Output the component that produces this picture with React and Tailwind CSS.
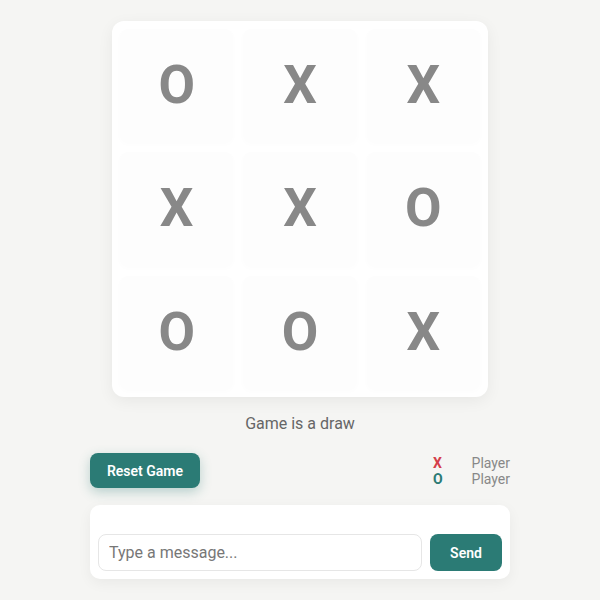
import React, { useState } from 'react';

const board = ['O', 'X', 'X', 'X', 'X', 'O', 'O', 'O', 'X'];

const App = () => {
  const [message, setMessage] = useState('');

  return (
    <div className="min-h-[600px] bg-[#f5f5f3] pt-[21px] font-['Roboto',sans-serif]">
      <div className="mx-auto w-[420px] flex flex-col items-center">
        {/* Board */}
        <div className="w-[376px] h-[376px] bg-white rounded-xl shadow-[0_4px_16px_rgba(0,0,0,0.06)] p-2 grid grid-cols-3 gap-[10px]">
          {board.map((cell, i) => (
            <div
              key={i}
              className="flex items-center justify-center rounded-lg bg-[#fdfdfd] shadow-[0_2px_6px_rgba(0,0,0,0.015)] text-[53px] font-bold text-[#888888] leading-none"
            >
              {cell}
            </div>
          ))}
        </div>

        {/* Status */}
        <p className="mt-[15px] text-base leading-6 text-[#666666]">Game is a draw</p>

        {/* Controls */}
        <div className="mt-[17px] w-full flex items-center justify-between">
          <button className="w-[110px] h-[35px] rounded-lg bg-[#2b7b75] text-white text-sm font-semibold shadow-[0_4px_12px_rgba(43,123,117,0.3)]">
            Reset Game
          </button>
          <div className="grid grid-cols-[auto_auto] gap-x-[29px] text-sm leading-4">
            <span className="font-bold text-[#d43d4a]">X</span>
            <span className="text-[#888888]">Player</span>
            <span className="font-bold text-[#2b7b75]">O</span>
            <span className="text-[#888888]">Player</span>
          </div>
        </div>

        {/* Chat */}
        <div className="mt-[17px] w-full bg-white rounded-[10px] shadow-[0_4px_14px_rgba(0,0,0,0.05)] px-2 pb-2 pt-[29px]">
          <div className="flex gap-2">
            <input
              type="text"
              value={message}
              onChange={(e) => setMessage(e.target.value)}
              placeholder="Type a message..."
              className="flex-1 h-[37px] rounded-lg border border-[#e6e6e6] px-[10px] text-base text-[#333] placeholder:text-[#777777] outline-none"
            />
            <button className="w-[72px] h-[37px] rounded-lg bg-[#2b7b75] text-white text-sm font-semibold">
              Send
            </button>
          </div>
        </div>
      </div>
    </div>
  );
};

export default App;
